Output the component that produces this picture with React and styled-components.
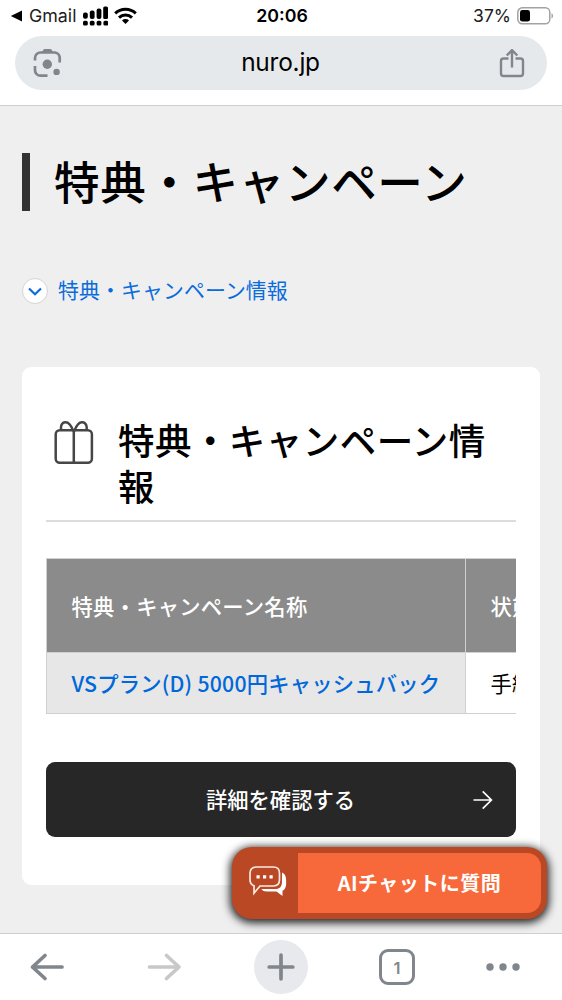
import React from "react";
import styled, { createGlobalStyle } from "styled-components";

const Global = createGlobalStyle`
  * { box-sizing: border-box; }
  body { margin: 0; background: #efefef; overflow: hidden; }
  h1, h2, p { margin: 0; font-weight: 500; }
  svg { display: block; flex: none; }
`;

const Screen = styled.div`
  width: 562px;
  height: 1000px;
  display: flex;
  flex-direction: column;
  overflow: hidden;
  background: #efefef;
  color: #000;
  font-family: "Noto Sans CJK JP", sans-serif;
`;

const Chrome = styled.header`
  flex: none;
  height: 106px;
  background: #fff;
  border-bottom: 1px solid #cfcfcf;
  font-family: Inter, sans-serif;
`;

const StatusBar = styled.div`
  height: 36px;
  padding: 0 8px 5px 10px;
  display: grid;
  grid-template-columns: 1fr auto 1fr;
  align-items: center;
`;

const StatusSide = styled.div`
  display: flex;
  align-items: center;
  justify-content: ${(p) => p.$align};
  gap: ${(p) => p.$gap}px;
`;

const StatusText = styled.span`
  font-size: ${(p) => p.$size}px;
  font-weight: ${(p) => p.$weight || 400};
  letter-spacing: ${(p) => p.$track || 0}px;
  line-height: 24px;
  color: ${(p) => p.$color || "#1c1c1c"};
`;

const AddressBar = styled.div`
  height: 54px;
  margin: 0 15px;
  padding: 0 21px 0 16px;
  border-radius: 27px;
  background: #e6e9ec;
  display: grid;
  grid-template-columns: 32px 1fr 28px;
  align-items: center;
`;

const Address = styled.span`
  text-align: center;
  font-size: 24.4px;
  line-height: 30px;
  padding-bottom: 3px;
  letter-spacing: -0.2px;
`;

const Page = styled.main`
  flex: 1;
  min-height: 0;
  padding: 47px 22px 0;
  overflow: hidden;
`;

const Title = styled.h1`
  height: 58px;
  padding-left: 24px;
  border-left: 8px solid #333;
  font-size: 45.6px;
  line-height: 55px;
  letter-spacing: 0.6px;
  white-space: nowrap;
`;

const AnchorLink = styled.a`
  margin-top: 66px;
  height: 28px;
  display: flex;
  align-items: center;
  gap: 10px;
  font-size: 20.9px;
  line-height: 28px;
  letter-spacing: 0.1px;
  color: #0a6bdc;
`;

const LinkText = styled.span`
  padding-bottom: 4px;
`;

const ChevronDisc = styled.span`
  width: 26px;
  height: 26px;
  border-radius: 50%;
  border: 1px solid #d4d4d4;
  background: #fff;
  display: flex;
  align-items: center;
  justify-content: center;
`;

const Card = styled.section`
  margin-top: 62px;
  width: 518px;
  height: 518px;
  padding: 50px 24px 0;
  border-radius: 9px;
  background: #fff;
`;

const CardHeader = styled.div`
  height: 105px;
  display: flex;
  align-items: flex-start;
  border-bottom: 2px solid #dcdcdc;
  padding: 0 0 0 7px;
  gap: 23px;

  svg { margin-top: 2px; }
`;

const CardTitle = styled.h2`
  flex: 1;
  font-size: 36.5px;
  line-height: 46px;
  letter-spacing: 0.45px;
`;

const TableScroll = styled.div`
  margin-top: 36px;
  width: 470px;
  overflow: hidden;
`;

const Table = styled.div`
  width: 640px;
  display: grid;
  grid-template-columns: 419px 1fr;
  grid-template-rows: 94px 61px;
  border: 1px solid #d0d0d0;
  border-bottom: 0;
`;

const Cell = styled.div`
  display: flex;
  align-items: center;
  padding: 0 24px 1px 24.5px;
  white-space: nowrap;
  font-size: 21.3px;
  letter-spacing: ${(p) => p.$track ?? 0.25}px;
  font-weight: ${(p) => (p.$regular ? 400 : 500)};
  color: ${(p) => p.$color};
  background: ${(p) => p.$bg};
  border-right: 1px solid #d0d0d0;
  border-bottom: 1px solid #d0d0d0;
`;

const DetailButton = styled.button`
  margin-top: 48px;
  width: 470px;
  height: 75px;
  padding: 0 23px;
  border: 0;
  border-radius: 9px;
  background: #272727;
  color: #fff;
  display: grid;
  grid-template-columns: 20px 1fr 20px;
  align-items: center;
  font: 500 21.3px/30px "Noto Sans CJK JP", sans-serif;
`;

const ButtonText = styled.span`
  padding: 0 1px 1px 0;
`;

const ChatButton = styled.button`
  position: absolute;
  left: 232px;
  top: 847px;
  width: 315px;
  height: 72px;
  padding: 6px 6px 6px 0;
  border: 0;
  border-radius: 20px;
  background: #ba4825;
  box-shadow: 0 2px 9px 2px rgba(0, 0, 0, 0.85);
  display: flex;
`;

const ChatIconSlot = styled.span`
  width: 66px;
  height: 60px;
  padding: 13px 0 0 17px;
`;

const ChatLabel = styled.span`
  flex: 1;
  border-radius: 0 14px 14px 0;
  background: #f7693a;
  color: #fff;
  text-align: center;
  font: 700 20px/60px "Noto Sans CJK JP", sans-serif;
  letter-spacing: 0.5px;
`;

const Toolbar = styled.nav`
  flex: none;
  height: 67px;
  padding: 0 38px 0 25px;
  border-top: 1px solid #cfcfcf;
  background: #fff;
  display: flex;
  align-items: center;
`;

const ToolSlot = styled.span`
  width: ${(p) => p.$w}px;
  margin-right: ${(p) => p.$after}px;
  display: flex;
  justify-content: center;
`;

const NewTab = styled.span`
  width: 54px;
  height: 54px;
  border-radius: 50%;
  background: #e8e9ed;
  display: flex;
  align-items: center;
  justify-content: center;
`;

const TabCount = styled.span`
  width: 36px;
  height: 36px;
  border: 3px solid #80868b;
  border-radius: 9px;
  color: #80868b;
  text-align: center;
  font: 600 16.5px/32px Inter, sans-serif;
`;

const gray = "#80868b";

const Signal = () => (
  <svg width="26" height="20" viewBox="0 0 26 20" fill="#000">
    {[0, 1, 2, 3].map((i) => (
      <rect key={i} x={1 + i * 6.8} y="14.8" width="4.8" height="4.8" rx="1.6" />
    ))}
    <rect x="1" y="6.5" width="4.8" height="6.2" rx="2" />
    <rect x="7.8" y="4.500" width="4.800" height="8.400" rx="2" />
    <rect x="14.600" y="2.500" width="4.800" height="10.500" rx="2" />
    <rect x="21.200" y="0.400" width="4.800" height="12.600" rx="1.500" />
  </svg>
);

const Wifi = () => (
  <svg width="23" height="18" viewBox="0 0 23 18" fill="none" stroke="#000" strokeWidth="3">
    <path d="M1.200 6.400a15 15 0 0 1 20.600 0" />
    <path d="M5 10.600a9.300 9.300 0 0 1 13 0" />
    <path d="M11.500 17 8 13.400a5 5 0 0 1 7 0Z" fill="#000" stroke="none" />
  </svg>
);

const Battery = () => (
  <svg width="37" height="18" viewBox="0 0 37 18">
    <rect x="0.800" y="0.800" width="32" height="16" rx="4.500" fill="none" stroke="#a2a2a2" strokeWidth="1.500" />
    <rect x="3" y="3" width="10" height="11.600" rx="2.400" fill="#000" />
    <path d="M34.500 6.300c2 .6 2 4.600 0 5.200Z" fill="#a2a2a2" />
  </svg>
);

const Lens = () => (
  <svg width="32" height="30" viewBox="0 0 32 30" fill="none" stroke={gray} strokeWidth="2.700">
    <path d="M4 12.500V10a5.500 5.500 0 0 1 5.500-5.500h14.500A5.500 5.500 0 0 1 28.700 10v4.500" />
    <path d="M4 18v4.200a5.500 5.500 0 0 0 5.500 5.500H16.500" />
    <path d="M10.500 5 12 2.200Q12.600 1 14 1h5Q20.300 1 21 2.200L22.500 5Z" fill={gray} stroke="none" />
    <circle cx="16.300" cy="16.300" r="4.700" fill={gray} stroke="none" />
    <circle cx="25.600" cy="23.900" r="3.200" fill={gray} stroke="none" />
  </svg>
);

const Share = () => (
  <svg width="28" height="30" viewBox="0 0 28 30" fill="none" stroke={gray} strokeWidth="2.400" strokeLinejoin="round">
    <path d="M10.500 10.500H5.500A2.500 2.500 0 0 0 3 13v12.500A2.500 2.500 0 0 0 5.500 28h17a2.500 2.500 0 0 0 2.500-2.500V13a2.500 2.500 0 0 0-2.500-2.500h-5" />
    <path d="M14 19.500V2.500M8.700 7.500 14 2.200l5.300 5.300" />
  </svg>
);

const Gift = () => (
  <svg width="42" height="46" viewBox="0 0 42 46" fill="none" stroke="#464646" strokeWidth="2.500" strokeLinejoin="round">
    <rect x="2.700" y="11.200" width="36.200" height="32.500" rx="4" />
    <path d="M20.800 11.500V44M20.300 12C18 6 15.500 3 12.300 3.300 8.500 3.600 6.800 8 8.700 11.500M21.300 12C23.600 6 26.200 3 29.300 3.300c3.800.3 5.600 4.700 3.700 8.200" />
  </svg>
);

const ChatBubbles = () => (
  <svg width="38" height="31" viewBox="0 0 38 31">
    <path d="M33 6.500c3.500 1.500 4.200 4.500 4.200 9 0 5-.7 8-3.700 9.200V30l-6-4.500H18c-3 0-4.500-.8-5.600-2.500H26c5 0 7-2.500 7-7.500Z" fill="#fff" />
    <path d="M7.500 1h16.800q6.200 0 6.200 6.200v6.600q0 6.200-6.200 6.200H11L5 27.200V19.700Q1 18.500 1 13.800V7.200Q1 1 7.500 1Z" fill="#ba4825" stroke="#fbe9e3" strokeWidth="1.700" />
    <path d="M7.500 9.200h3.200v3.200H7.500zM14 9.200h3.200v3.200H14zM20.500 9.200h3.200v3.200h-3.200z" fill="#fff" />
  </svg>
);

const Arrow = ({ color, flip }) => (
  <svg width="36" height="30" viewBox="0 0 36 30" fill="none" stroke={color} strokeWidth="3.700" strokeLinecap="round" strokeLinejoin="round">
    <path d={flip ? "M3.500 15h29M20.500 3.500 33 15 20.500 26.500" : "M33 15H3.500M16 3.500 3.500 15 16 26.500"} />
  </svg>
);

export default function App() {
  return (
    <>
      <Global />
      <Screen>
        <Chrome>
          <StatusBar>
            <StatusSide $align="flex-start" $gap={6}>
              <StatusSide $align="flex-start" $gap={7}>
                <svg width="12" height="12" viewBox="0 0 12 12"><path d="M.8 6 12 .5v11Z" /></svg>
                <StatusText $size={17.8}>Gmail</StatusText>
              </StatusSide>
              <Signal />
              <Wifi />
            </StatusSide>
            <StatusText $size={17.8} $weight={600} $color="#000">20:06</StatusText>
            <StatusSide $align="flex-end" $gap={6}>
              <StatusText $size={17.5}>37%</StatusText>
              <Battery />
            </StatusSide>
          </StatusBar>
          <AddressBar>
            <Lens />
            <Address>nuro.jp</Address>
            <Share />
          </AddressBar>
        </Chrome>

        <Page>
          <Title>特典・キャンペーン</Title>
          <AnchorLink>
            <ChevronDisc>
              <svg width="14" height="9" viewBox="0 0 14 9" fill="none" stroke="#0a6bdc" strokeWidth="2.200"><path d="m1 1.500 6 5.700 6-5.700" /></svg>
            </ChevronDisc>
            <LinkText>特典・キャンペーン情報</LinkText>
          </AnchorLink>
          <Card>
            <CardHeader>
              <Gift />
              <CardTitle>特典・キャンペーン情報</CardTitle>
            </CardHeader>
            <TableScroll>
              <Table>
                <Cell $color="#fff" $bg="#8b8b8b">特典・キャンペーン名称</Cell>
                <Cell $color="#fff" $bg="#8b8b8b">状態</Cell>
                <Cell $color="#0068d9" $bg="#e7e7e7" $track={0.2}>VSプラン(D) 5000円キャッシュバック</Cell>
                <Cell $color="#000" $bg="#fff" $regular>手続き中</Cell>
              </Table>
            </TableScroll>
            <DetailButton>
              <span />
              <ButtonText>詳細を確認する</ButtonText>
              <svg width="20" height="20" viewBox="0 0 20 20" fill="none" stroke="#fff" strokeWidth="1.700"><path d="M.5 10h18M9.700 1.300 18.400 10l-8.700 8.700" /></svg>
            </DetailButton>
          </Card>
        </Page>

        <Toolbar>
          <ToolSlot $w={44} $after={73}><Arrow color={gray} /></ToolSlot>
          <ToolSlot $w={44} $after={68}><Arrow color="#c8c8c8" flip /></ToolSlot>
          <ToolSlot $w={54} $after={71}>
            <NewTab>
              <svg width="28" height="28" viewBox="0 0 28 28" stroke={gray} strokeWidth="3.700" strokeLinecap="round"><path d="M14 2.200v23.600M2.200 14h23.600" /></svg>
            </NewTab>
          </ToolSlot>
          <ToolSlot $w={36} $after={70}><TabCount>1</TabCount></ToolSlot>
          <ToolSlot $w={36} $after={0}>
            <svg width="36" height="8" viewBox="0 0 36 8" fill={gray}><circle cx="5" cy="4" r="3.700" /><circle cx="18" cy="4" r="3.700" /><circle cx="31" cy="4" r="3.700" /></svg>
          </ToolSlot>
        </Toolbar>
        <ChatButton>
          <ChatIconSlot><ChatBubbles /></ChatIconSlot>
          <ChatLabel>AIチャットに質問</ChatLabel>
        </ChatButton>
      </Screen>
    </>
  );
}
